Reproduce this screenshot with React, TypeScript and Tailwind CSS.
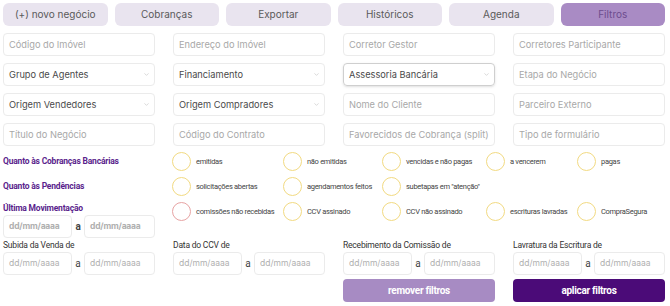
import { ChevronDown } from "lucide-react";

const tabs = ["(+) novo negócio", "Cobranças", "Exportar", "Históricos", "Agenda", "Filtros"];

type Field = { label: string; select?: boolean; strong?: boolean };

const fields: Field[] = [
  { label: "Código do Imóvel" },
  { label: "Endereço do Imóvel" },
  { label: "Corretor Gestor" },
  { label: "Corretores Participante" },
  { label: "Grupo de Agentes", select: true },
  { label: "Financiamento", select: true },
  { label: "Assessoria Bancária", select: true, strong: true },
  { label: "Etapa do Negócio" },
  { label: "Origem Vendedores", select: true },
  { label: "Origem Compradores", select: true },
  { label: "Nome do Cliente" },
  { label: "Parceiro Externo" },
  { label: "Título do Negócio" },
  { label: "Código do Contrato" },
  { label: "Favorecidos de Cobrança (split)" },
  { label: "Tipo de formulário" },
];

const checks: { label: string; red?: boolean }[][] = [
  [
    { label: "emitidas" },
    { label: "não emitidas" },
    { label: "vencidas e não pagas" },
    { label: "a vencerem" },
    { label: "pagas" },
  ],
  [{ label: "solicitações abertas" }, { label: "agendamentos feitos" }, { label: "subetapas em \"atenção\"" }],
  [
    { label: "comissões não recebidas", red: true },
    { label: "CCV assinado" },
    { label: "CCV não assinado" },
    { label: "escrituras lavradas" },
    { label: "CompraSegura" },
  ],
];

const poppins = "font-['Inter',sans-serif]";
const roboto = "font-['Roboto',sans-serif]";

function DateRange() {
  return (
    <div className="flex items-center">
      <div className={`w-[69px] h-[23px] border border-[#ebebeb] rounded-sm flex items-center pl-[5px] text-[8.5px] text-[#b0b0b0] ${poppins}`}>
        dd/mm/aaaa
      </div>
      <span className={`w-[12px] text-center text-[10px] text-[#444] ${roboto}`}>a</span>
      <div className={`flex-1 h-[23px] border border-[#ebebeb] rounded-sm flex items-center pl-[5px] text-[8.5px] text-[#b0b0b0] ${poppins}`}>
        dd/mm/aaaa
      </div>
    </div>
  );
}

function Check({ label, red }: { label: string; red?: boolean }) {
  return (
    <div className="flex items-center gap-[5px]">
      <span
        className={`w-[19px] h-[19px] rounded-full border shrink-0 ${red ? "border-[#e7a3a3]" : "border-[#f2da82]"}`}
      />
      <span className={`text-[7.5px] tracking-[-0.3px] text-[#444] whitespace-nowrap ${roboto}`}>{label}</span>
    </div>
  );
}

export default function App() {
  return (
    <div className="w-[670px] h-[306px] bg-white px-[3px] pt-[3px] overflow-hidden">
      {/* Tabs */}
      <div className="grid grid-cols-6 gap-x-[7px] w-[662px]">
        {tabs.map((t) => (
          <div
            key={t}
            className={`h-[23px] rounded-md flex items-center justify-center text-[10px] ${poppins} ${
              t === "Filtros" ? "bg-[#a98bc4] text-[#6d4b8e]" : "bg-[#e9e4ef] text-[#5a5a5a]"
            }`}
          >
            {t}
          </div>
        ))}
      </div>

      {/* Inputs */}
      <div className="grid grid-cols-4 gap-x-[18px] gap-y-[7px] w-[662px] mt-[7px]">
        {fields.map((f) => (
          <div
            key={f.label}
            className={`h-[23px] rounded-sm border flex items-center justify-between pl-[5px] pr-[4px] text-[9.25px] ${poppins} ${
              f.strong ? "border-[#cfcfcf] shadow-sm" : "border-[#ebebeb]"
            } ${f.select ? "text-[#4a4a4a]" : "text-[#a8a8a8]"}`}
          >
            <span className="whitespace-nowrap">{f.label}</span>
            {f.select && <ChevronDown className="w-[7px] h-[7px] text-[#c0c0c0]" />}
          </div>
        ))}
      </div>

      {/* Checkbox sections */}
      <div className="grid grid-cols-[152px_1fr] gap-x-[17px] w-[662px] mt-[3px]">
        <div className={`flex flex-col text-[8.5px] tracking-[-0.2px] font-bold text-[#5a1e8c] ${roboto}`}>
          <div className="h-[25px] flex items-center">Quanto às Cobranças Bancárias</div>
          <div className="h-[25px] flex items-center">Quanto às Pendências</div>
          <div className="h-[14px] flex items-center mt-[2px]">Última Movimentação</div>
          <DateRange />
        </div>
        <div className="grid grid-cols-[111px_99px_104px_91px_auto] auto-rows-[25px] items-center">
          {checks.map((row, i) =>
            [0, 1, 2, 3, 4].map((j) =>
              row[j] ? <Check key={`${i}-${j}`} label={row[j].label} red={row[j].red} /> : <div key={`${i}-${j}`} />
            )
          )}
        </div>
      </div>

      {/* Date ranges */}
      <div className="grid grid-cols-4 gap-x-[18px] w-[662px] mt-[1px]">
        {["Subida da Venda de", "Data do CCV de", "Recebimento da Comissão de", "Lavratura da Escritura de"].map((l) => (
          <div key={l} className="flex flex-col">
            <span className={`text-[8.5px] tracking-[-0.2px] text-[#333] leading-[13px] ${roboto}`}>{l}</span>
            <DateRange />
          </div>
        ))}
        <div />
        <div />
        <button className={`mt-[4px] h-[23px] rounded-[4px] bg-[#a78bc3] text-white text-[10px] tracking-[-0.3px] font-bold ${roboto}`}>
          remover filtros
        </button>
        <button className={`mt-[4px] h-[23px] rounded-[4px] bg-[#4b0b78] text-white text-[10px] tracking-[-0.3px] font-bold ${roboto}`}>
          aplicar filtros
        </button>
      </div>
    </div>
  );
}
